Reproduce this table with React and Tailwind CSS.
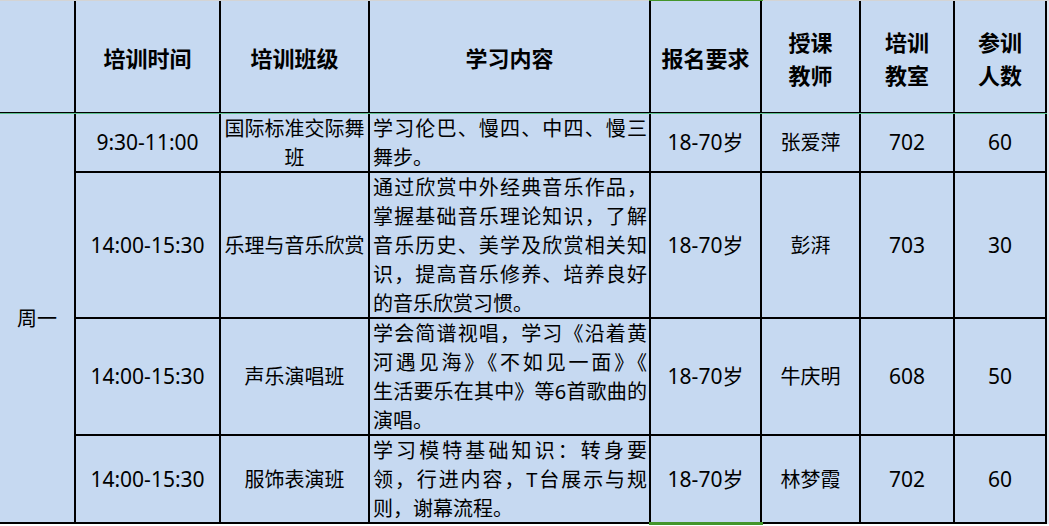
const cols = 'grid grid-cols-[74px_143px_147px_279px_109px_97px_92px_90px]'

const rows = [
  {
    time: '9:30-11:00',
    cls: ['国际标准交际舞', '班'],
    content: ['学习伦巴、慢四、中四、慢三', '舞步。'],
    age: '18-70岁',
    teacher: '张爱萍',
    room: '702',
    count: '60',
  },
  {
    time: '14:00-15:30',
    cls: ['乐理与音乐欣赏'],
    content: [
      '通过欣赏中外经典音乐作品，',
      '掌握基础音乐理论知识，了解',
      '音乐历史、美学及欣赏相关知',
      '识，提高音乐修养、培养良好',
      '的音乐欣赏习惯。',
    ],
    age: '18-70岁',
    teacher: '彭湃',
    room: '703',
    count: '30',
  },
  {
    time: '14:00-15:30',
    cls: ['声乐演唱班'],
    content: [
      '学会简谱视唱，学习《沿着黄',
      '河遇见海》《不如见一面》《',
      '生活要乐在其中》等6首歌曲的',
      '演唱。',
    ],
    age: '18-70岁',
    teacher: '牛庆明',
    room: '608',
    count: '50',
  },
  {
    time: '14:00-15:30',
    cls: ['服饰表演班'],
    content: ['学习模特基础知识：转身要', '领，行进内容，T台展示与规', '则，谢幕流程。'],
    age: '18-70岁',
    teacher: '林梦霞',
    room: '702',
    count: '60',
  },
]

function Head({ children }) {
  return (
    <div className="bg-[#c6d9f1] flex items-center justify-center text-center pt-1 text-[22px] leading-[33px] font-bold">
      <div>{children}</div>
    </div>
  )
}

function Cell({ children, num }) {
  return (
    <div className={`bg-[#c6d9f1] flex items-center justify-center text-center ${num ? 'text-[21px]' : ''}`}>
      {children}
    </div>
  )
}

export default function App() {
  return (
    <div className="relative w-[1049px] h-[526px] bg-white overflow-hidden text-black font-['Noto_Sans','Noto_Sans_CJK_SC',sans-serif]">
      <div className="h-[1px] bg-[#d4d4d4]" />
      <div className="flex">
        <div className="w-[1047px]">
          <div className={`${cols} h-[111px] gap-x-[2px] pr-[2px] bg-black`}>
            <div className="bg-[#c6d9f1]" />
            <Head>培训时间</Head>
            <Head>培训班级</Head>
            <Head>学习内容</Head>
            <Head>报名要求</Head>
            <Head>授课<br />教师</Head>
            <Head>培训<br />教室</Head>
            <Head>参训<br />人数</Head>
          </div>
          <div className="h-[1px] bg-black" />
          <div className="h-[1px] bg-[#5cbf8f]" />
          <div className={`${cols} grid-rows-[57px_144px_115px_86px] gap-[2px] pr-[2px] pb-[2px] bg-black text-[20px] leading-[29px]`}>
            <div className="row-span-4 bg-[#c6d9f1] flex items-center justify-center">周一</div>
            {rows.map((r, i) => (
              <div key={i} className="contents">
                <Cell num>{r.time}</Cell>
                <Cell>
                  <div>
                    {r.cls.map((c) => (
                      <div key={c}>{c}</div>
                    ))}
                  </div>
                </Cell>
                <div className="bg-[#c6d9f1] flex flex-col justify-center pl-[3px] pr-[2px]">
                  {r.content.map((line, j) => (
                    <div
                      key={j}
                      className={j < r.content.length - 1 ? 'text-justify [text-align-last:justify]' : 'text-left'}
                    >
                      {line}
                    </div>
                  ))}
                </div>
                <Cell num>{r.age}</Cell>
                <Cell>{r.teacher}</Cell>
                <Cell num>{r.room}</Cell>
                <Cell num>{r.count}</Cell>
              </div>
            ))}
          </div>
        </div>
        <div className="flex-1 bg-[#dde6f0]" />
      </div>
      <div className="absolute top-0 left-[649px] w-[114px] h-[1px] bg-[#43952b]" />
      <div className="absolute top-[522px] left-[649px] w-[114px] h-[3px] bg-[#43952b]" />
    </div>
  )
}
